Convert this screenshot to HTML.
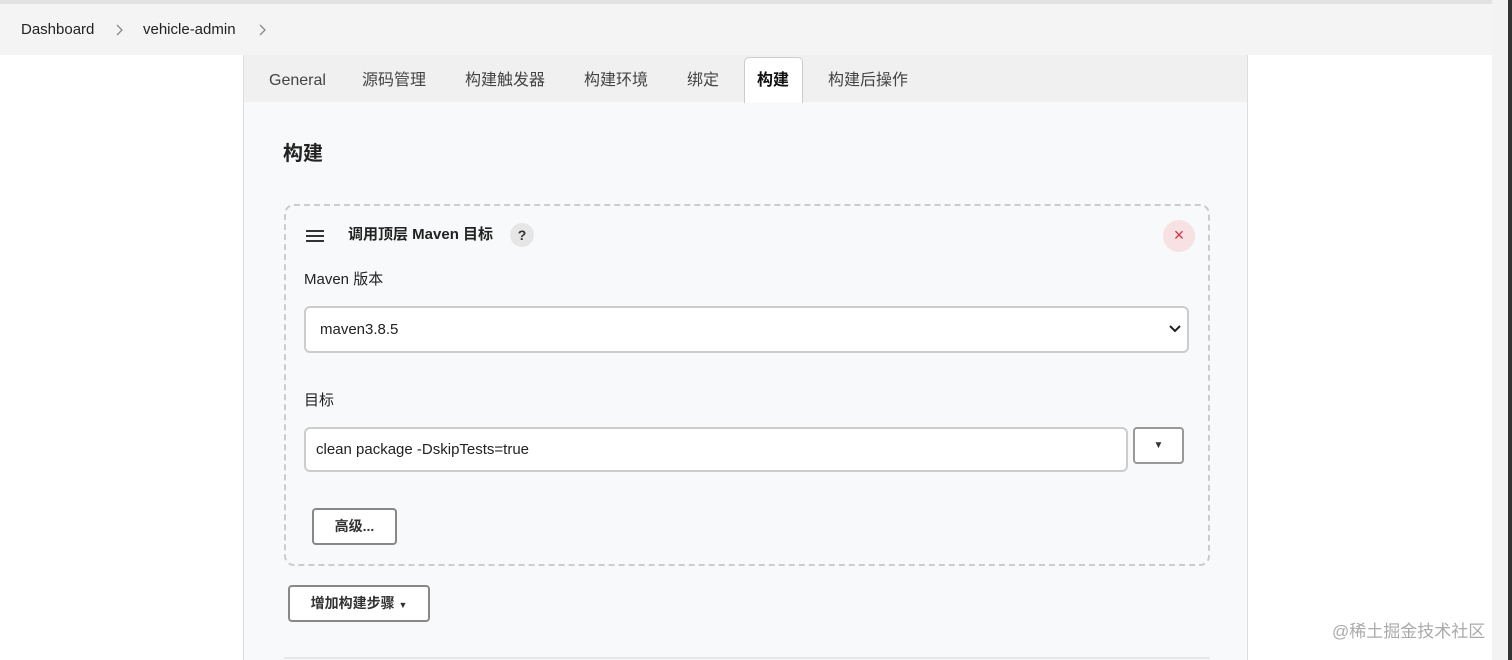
<!DOCTYPE html>
<html><head><meta charset="utf-8"><style>
*{box-sizing:border-box;margin:0;padding:0}
body{width:1512px;height:660px;overflow:hidden;background:#fff;font-family:"Liberation Sans","Noto Sans CJK SC",sans-serif;color:#222;position:relative;line-height:20px}
.top{position:absolute;left:0;top:0;width:1492px;height:4px;background:#e2e2e2}
.hdr{position:absolute;left:0;top:4px;width:1492px;height:51px;background:#f4f4f4}
.bc{position:absolute;top:16px;font-size:15px;color:#222;line-height:20px}
.rs{position:absolute;left:1492px;top:0;width:16px;height:660px;background:#f3f3f3}
.rd{position:absolute;left:1508px;top:0;width:4px;height:660px;background:#333}
.panel{position:absolute;left:243px;top:55px;width:1005px;height:605px;background:#f8f9fa;border-left:1px solid #ddd;border-right:1px solid #ddd}
.tabs{position:absolute;left:0;top:0;width:1003px;height:47px;background:#f0f0f0}
.tab{position:absolute;top:16px;font-size:16px;color:#444;line-height:20px;height:20px}
.act{position:absolute;left:500px;top:2px;width:59px;height:46px;background:#fff;border:1px solid #ccc;border-bottom:none;border-radius:5px 5px 0 0}
.h2{position:absolute;left:39px;top:87px;font-size:20px;font-weight:bold;line-height:24px}
.box{position:absolute;left:40px;top:149px;width:926px;height:362px;border:2px dashed #ccc;border-radius:10px}
.sel{position:absolute;background:#fff;border:2px solid #ccc;border-radius:6px}
.btn{position:absolute;background:#fff;border:2px solid #888;border-radius:4px;font-size:14px;text-align:center;font-weight:bold;color:#333}
</style></head><body>
<div class="top"></div>
<div class="hdr">
<div class="bc" style="left:21px">Dashboard</div>
<svg style="position:absolute;left:116px;top:20px" width="8" height="12"><path d="M1 1l5 5-5 5" fill="none" stroke="#888" stroke-width="1.3"/></svg>
<div class="bc" style="left:143px">vehicle-admin</div>
<svg style="position:absolute;left:259px;top:20px" width="8" height="12"><path d="M1 1l5 5-5 5" fill="none" stroke="#888" stroke-width="1.3"/></svg>
</div>
<div class="panel">
<div class="tabs">
<div class="act"></div>
<div class="tab" style="left:25px">General</div>
<div class="tab" style="left:118px">源码管理</div>
<div class="tab" style="left:221px">构建触发器</div>
<div class="tab" style="left:340px">构建环境</div>
<div class="tab" style="left:443px">绑定</div>
<div class="tab" style="left:513px;font-weight:bold;color:#111">构建</div>
<div class="tab" style="left:584px">构建后操作</div>
</div>
<div class="h2">构建</div>
<div class="box">
<svg style="position:absolute;left:19px;top:23px" width="20" height="14"><path d="M1 2h18M1 7h18M1 12h18" stroke="#333" stroke-width="2"/></svg>
<div style="position:absolute;left:62px;top:19px;font-size:15px;font-weight:bold;line-height:20px">调用顶层 Maven 目标</div>
<div style="position:absolute;left:224px;top:17px;width:24px;height:24px;border-radius:50%;background:#e6e6e6;text-align:center;font-size:14px;font-weight:bold;line-height:24px;color:#333">?</div>
<div style="position:absolute;left:877px;top:14px;width:32px;height:32px;border-radius:50%;background:#f7e1e3;text-align:center;line-height:30px;color:#d6334a;font-size:18px">×</div>
<div style="position:absolute;left:18px;top:64px;font-size:15px;line-height:20px">Maven 版本</div>
<div class="sel" style="left:18px;top:100px;width:885px;height:47px"><span style="position:absolute;left:14px;top:12px;font-size:15px">maven3.8.5</span>
<svg style="position:absolute;right:6px;top:17px" width="12" height="8"><path d="M1 1l5 5 5-5" fill="none" stroke="#222" stroke-width="2"/></svg></div>
<div style="position:absolute;left:18px;top:185px;font-size:15px;line-height:20px">目标</div>
<div class="sel" style="left:18px;top:221px;width:824px;height:45px"><span style="position:absolute;left:10px;top:11px;font-size:15px">clean package -DskipTests=true</span></div>
<div class="btn" style="left:847px;top:221px;width:51px;height:37px;line-height:33px;font-size:10px;border-color:#999">▼</div>
<div class="btn" style="left:26px;top:302px;width:85px;height:37px;line-height:33px">高级...</div>
</div>
<div class="btn" style="left:44px;top:530px;width:142px;height:37px;line-height:33px">增加构建步骤 <span style="font-size:9px">▼</span></div>
<div style="position:absolute;left:40px;top:602px;width:926px;height:2px;background:#e6e6e6"></div>
</div>
<div style="position:absolute;left:1332px;top:622px;font-size:17px;color:#aaa">@稀土掘金技术社区</div>
<div class="rs"></div><div class="rd"></div>
</body></html>
